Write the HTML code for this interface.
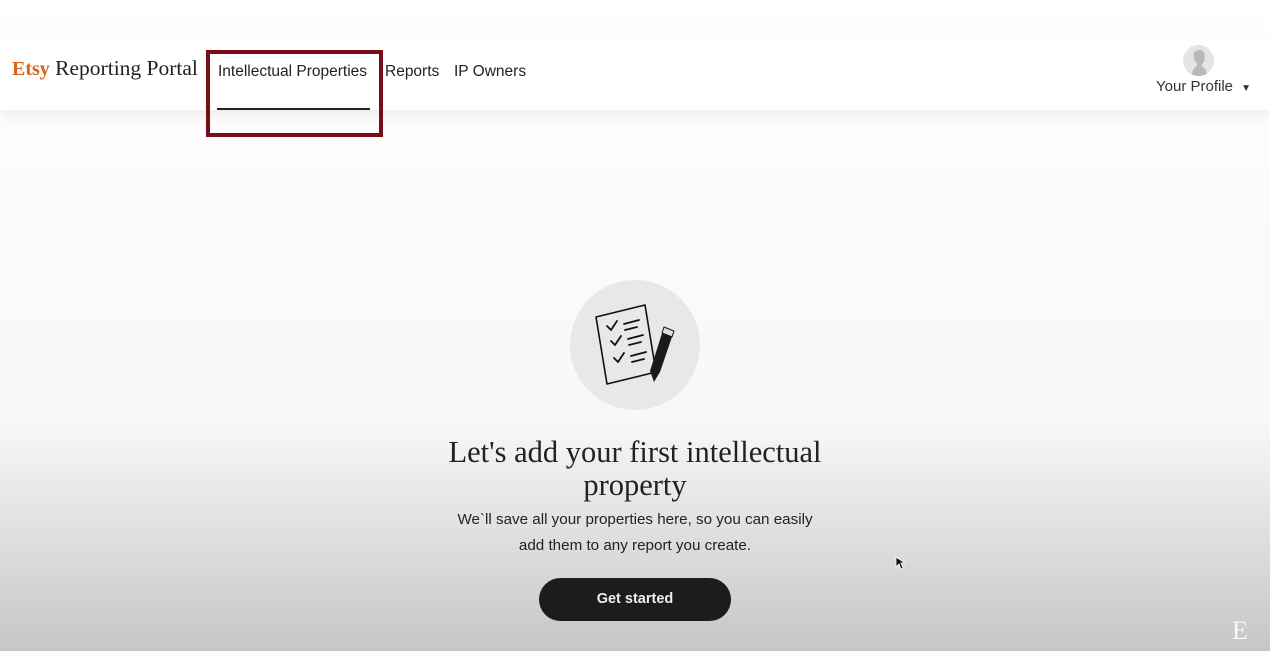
<!DOCTYPE html>
<html><head><meta charset="utf-8"><style>
*{margin:0;padding:0;box-sizing:border-box}
body{width:1270px;height:651px;overflow:hidden;position:relative;font-family:"Liberation Sans",sans-serif;
background:linear-gradient(to bottom,#fff 0px,#fcfcfc 120px,#f8f8f8 420px,#dedede 540px,#c6c6c6 651px);}
.hdr{position:absolute;left:0;top:40px;width:1270px;height:70px;background:#fff;box-shadow:0 6px 12px rgba(0,0,0,0.06)}
.logo{position:absolute;left:12px;top:56px;font-family:"Liberation Serif",serif;font-size:21.5px;color:#222;white-space:nowrap}
.logo span{color:#d5641c;font-weight:bold;font-size:20px}
.nav{position:absolute;top:63px;font-size:15.5px;color:#222;white-space:nowrap}
.box{position:absolute;left:206px;top:50px;width:177px;height:87px;border:4px solid #7a0b18}
.ul{position:absolute;left:217px;top:108px;width:153px;height:2px;background:#222}
.av{position:absolute;left:1183px;top:45px;width:31px;height:31px;border-radius:50%;background:#e4e4e4;overflow:hidden}
.prof{position:absolute;left:1156px;top:78px;font-size:15px;color:#333;white-space:nowrap}
.circ{position:absolute;left:570px;top:280px;width:130px;height:130px;border-radius:50%;background:#e8e8e8}
h1{position:absolute;left:0;width:1270px;top:436px;text-align:center;font-family:"Liberation Serif",serif;font-weight:normal;font-size:30.5px;line-height:33px;color:#222}
p{position:absolute;left:0;width:1270px;top:507px;text-align:center;font-size:15.2px;line-height:25.5px;color:#222}
.btn{position:absolute;left:539px;top:578px;width:192px;height:43px;border-radius:22px;background:#1c1c1c;color:#eee;font-weight:bold;font-size:14.5px;text-align:center;line-height:43px}
.E{position:absolute;left:1232px;top:616px;font-family:"Liberation Serif",serif;font-size:26px;color:#fafafa}
</style></head><body>
<div class="hdr"></div>
<div class="logo"><span>Etsy</span> Reporting Portal</div>
<div class="nav" style="left:218px">Intellectual Properties</div>
<div class="nav" style="left:385px">Reports</div>
<div class="nav" style="left:454px">IP Owners</div>
<div class="box"></div><div class="ul"></div>
<div class="av"><svg width="31" height="31" viewBox="0 0 31 31"><path d="M9 31 C9 24 12 22 14 21 L14 18 C11 16 10 12 11 8 C13 4 19 4 21 7 C22 9 22 12 21 14 L22 16 L20 17 C20 19 19 20 18 21 C21 22 24 25 24 31Z" fill="#b9b9b9"/></svg></div>
<div class="prof">Your Profile <span style="font-size:10px;margin-left:4px">▼</span></div>
<div class="circ"></div>
<svg style="position:absolute;left:570px;top:280px" width="130" height="130" viewBox="570 280 130 130">
<path d="M596 317 L645 305 L656 372 L607 384 Z" fill="none" stroke="#111" stroke-width="1.6" stroke-linejoin="round"/>
<g fill="none" stroke="#111" stroke-width="1.8" stroke-linecap="round" stroke-linejoin="round">
<path d="M607 326 L611 330 L617 321"/><path d="M624 324 L639 320 M625 330 L637 327"/>
<path d="M611 341 L615 345 L621 336"/><path d="M628 339 L643 335 M629 345 L641 342"/>
<path d="M614 358 L618 362 L624 353"/><path d="M631 356 L646 352 M632 362 L644 359"/>
</g>
<path d="M664 327 L674 331 L660 372 L654 382 L650 371 Z" fill="#1a1a1a"/>
<path d="M664 327 L674 331 L672 337 L662 333 Z" fill="#ddd" stroke="#111" stroke-width="1"/>
</svg>
<h1>Let's add your first intellectual<br>property</h1>
<p>We`ll save all your properties here, so you can easily<br>add them to any report you create.</p>
<div class="btn">Get started</div>
<svg style="position:absolute;left:895px;top:556px" width="10" height="14"><path d="M1 1 L1 11 L4 8 L6 13 L8 12 L6 7 L10 7 Z" fill="#111" stroke="#fff" stroke-width=".8"/></svg>
<div class="E">E</div>
</body></html>
